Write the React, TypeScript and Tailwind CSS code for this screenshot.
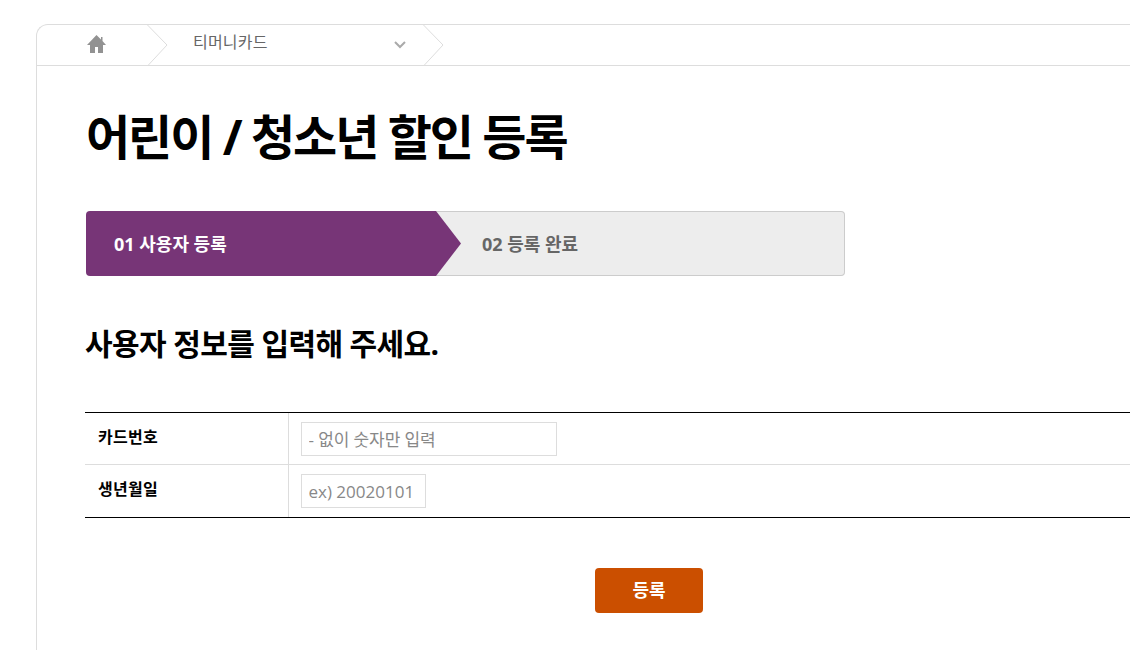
import { useState } from "react";

const fontStack = "font-['Open_Sans','Noto_Sans_CJK_KR',sans-serif]";

function Crumb() {
  return (
    <svg width="22" height="42" viewBox="0 0 22 42" fill="none" className="shrink-0">
      <path d="M0.5 0 L20 20 L0.5 41" stroke="#dddddd" strokeWidth="1" />
    </svg>
  );
}

export default function App() {
  const [cardNo, setCardNo] = useState("");
  const [birth, setBirth] = useState("");

  return (
    <div className={`h-[650px] w-[1130px] overflow-hidden bg-white pt-[24px] pl-[36px] ${fontStack}`}>
      <div className="h-[700px] w-[1200px] rounded-tl-[12px] border-t border-l border-[#dddddd]">
        {/* breadcrumb */}
        <div className="flex h-[41px] items-stretch border-b border-[#dddddd]">
          <div className="flex w-[110px] items-center pl-[50px]">
            <svg width="19" height="18" viewBox="0 0 19 18" fill="#929292" className="-mt-[2px]">
              <path d="M9.5 0 L14 4.5 V2 H15.5 V6 L19 10 H16 V18 H11 V12 H8 V18 H3 V10 H0 Z" />
            </svg>
          </div>
          <Crumb />
          <div className="flex w-[254px] items-start justify-between pt-[6px] pl-[24px] pr-[17px]">
            <span className="text-[16px] leading-[22px] tracking-[0.2px] text-[#666666]">티머니카드</span>
            <svg width="12" height="8" viewBox="0 0 12 8" fill="none" className="mt-[10px]">
              <path d="M1 1 L6 6 L11 1" stroke="#aaaaaa" strokeWidth="2" />
            </svg>
          </div>
          <Crumb />
        </div>

        <div className="pl-[48px]">
          <h1 className="mt-[36px] ml-[1px] text-[48px] leading-[70px] font-bold tracking-[-2.05px] text-black">
            어린이 / 청소년 할인 등록
          </h1>

          {/* steps */}
          <div className="mt-[39px] ml-[1px] flex h-[65px] w-[759px]">
            <div className="flex w-[350px] items-center rounded-l-[4px] bg-[#773577] pt-[1px] pl-[28px] text-[18px] font-bold text-white">
              01 사용자 등록
            </div>
            <div className="flex flex-1 rounded-r-[4px] border border-l-0 border-[#cccccc] bg-[#ededed]">
              <svg width="25" height="65" viewBox="0 0 25 65" className="-my-px shrink-0">
                <path d="M0 0 L25 32.5 L0 65 Z" fill="#773577" />
              </svg>
              <div className="flex items-center pt-[1px] pl-[21px] text-[18px] font-bold text-[#666666]">
                02 등록 완료
              </div>
            </div>
          </div>

          <h2 className="mt-[46px] text-[30px] leading-[44px] font-bold tracking-[-0.6px] text-black">
            사용자 정보를 입력해 주세요.
          </h2>

          <div className="mt-[46px] w-[1128px] border-y border-black">
            <table className="w-full border-collapse text-[16px]">
              <tbody>
                <tr className="h-[51px] border-b border-[#dddddd]">
                  <th className="w-[203px] border-r border-[#dddddd] pb-[3px] pl-[13px] text-left font-bold tracking-[0.3px] text-black">
                    카드번호
                  </th>
                  <td className="pt-[2px] pl-[12px]">
                    <input
                      value={cardNo}
                      onChange={(e) => setCardNo(e.target.value)}
                      placeholder="- 없이 숫자만 입력"
                      className="block h-[34px] w-[256px] border border-[#dddddd] px-[7px] text-[17px] tracking-[-0.1px] outline-none placeholder:text-[#888888]"
                    />
                  </td>
                </tr>
                <tr className="h-[53px]">
                  <th className="w-[203px] border-r border-[#dddddd] pb-[3px] pl-[13px] text-left font-bold tracking-[0.3px] text-black">
                    생년월일
                  </th>
                  <td className="pt-[1px] pl-[12px]">
                    <input
                      value={birth}
                      onChange={(e) => setBirth(e.target.value)}
                      placeholder="ex) 20020101"
                      className="block h-[34px] w-[125px] border border-[#dddddd] px-[7px] text-[17px] outline-none placeholder:text-[#888888]"
                    />
                  </td>
                </tr>
              </tbody>
            </table>
          </div>

          <div className="mt-[50px] flex w-[1128px] justify-center">
            <button className="h-[45px] w-[108px] rounded-[4px] bg-[#cb4f00] text-[18px] font-bold text-white">
              등록
            </button>
          </div>
        </div>
      </div>
    </div>
  );
}
